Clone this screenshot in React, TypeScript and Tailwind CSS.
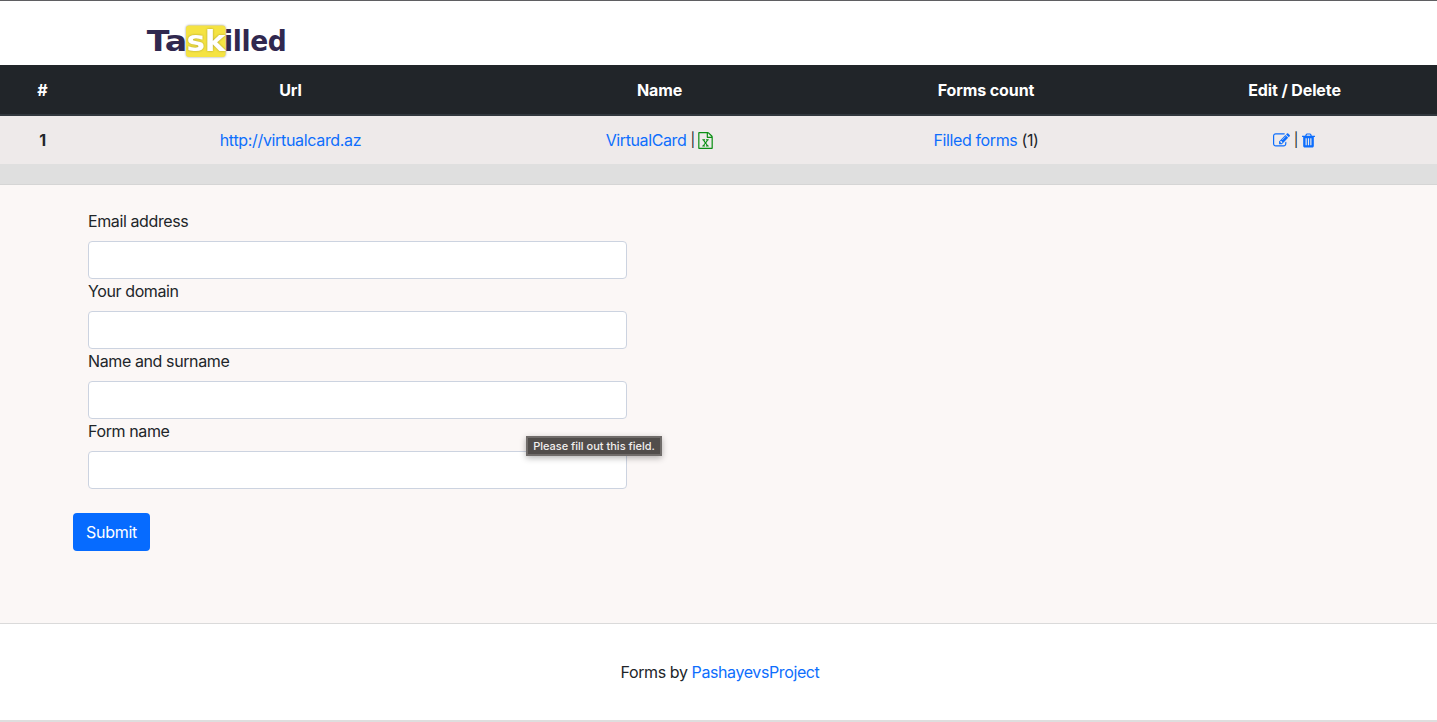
import React from "react";

const ICONS = {
  edit: "M888 1184l116-116-152-152-116 116v56h96v96h56zm440-720q-16-16-33 1l-350 350q-17 17-1 33t33-1l350-350q17-17 1-33zm80 594v190q0 119-84.5 203.5t-203.5 84.5h-832q-119 0-203.5-84.5t-84.5-203.5v-832q0-119 84.5-203.5t203.5-84.5h832q63 0 117 25 15 7 18 23 3 17-9 29l-49 49q-14 14-32 8-23-6-45-6h-832q-66 0-113 47t-47 113v832q0 66 47 113t113 47h832q66 0 113-47t47-113v-126q0-13 9-22l64-64q15-15 35-7t20 29zm-96-738l288 288-672 672h-288v-288zm444 132l-92 92-288-288 92-92q28-28 68-28t68 28l152 152q28 28 28 68t-28 68z",
  trash: "M704 1376v-704q0-14-9-23t-23-9h-64q-14 0-23 9t-9 23v704q0 14 9 23t23 9h64q14 0 23-9t9-23zm256 0v-704q0-14-9-23t-23-9h-64q-14 0-23 9t-9 23v704q0 14 9 23t23 9h64q14 0 23-9t9-23zm256 0v-704q0-14-9-23t-23-9h-64q-14 0-23 9t-9 23v704q0 14 9 23t23 9h64q14 0 23-9t9-23zm-544-992h448l-48-117q-7-9-17-11h-317q-10 2-17 11zm928 32v64q0 14-9 23t-23 9h-96v948q0 83-47 143.5t-113 60.5h-832q-66 0-113-58.5t-47-141.5v-952h-96q-14 0-23-9t-9-23v-64q0-14 9-23t23-9h309l70-167q15-37 54-63t79-26h320q40 0 79 26t54 63l70 167h309q14 0 23 9t9 23z",
  excel: "M1596 380q28 28 48 76t20 88v1152q0 40-28 68t-68 28h-1344q-40 0-68-28t-28-68v-1600q0-40 28-68t68-28h896q40 0 88 20t76 48zm-444-244v376h376q-10-29-22-41l-313-313q-12-12-41-22zm384 1528v-1024h-416q-40 0-68-28t-28-68v-416h-768v1536h1280zm-979-234v106h281v-106h-75l103-161q5-7 10-16.5t7.5-13.5 3.5-4h2q1 4 5 10 2 4 4.5 7.5t6 8 6.5 8.5l107 161h-76v106h291v-106h-68l-192-273 195-282h67v-107h-279v107h74l-103 159q-4 7-10 16.5t-9 13.5l-2 3h-2q-1-4-5-10-6-11-17-23l-106-159h76v-107h-290v107h68l189 272-194 283h-68z",
};

function Icon({ name, viewBox, className }: { name: keyof typeof ICONS; viewBox: string; className: string }) {
  return (
    <svg viewBox={viewBox} className={className} fill="currentColor" aria-hidden="true">
      <path d={ICONS[name]} />
    </svg>
  );
}

function Logo() {
  return (
    <svg width="150" height="38" viewBox="0 0 150 38" className="ml-[144px] block" aria-label="Taskilled">
      <g fontFamily="'DejaVu Sans', sans-serif" fontSize="29" fontWeight="700" fill="#30284f">
        <text x="2.8" y="29" textLength="40" lengthAdjust="spacingAndGlyphs">Ta</text>
        <rect x="42" y="3.5" width="39.5" height="31.5" rx="3" fill="#f5e342" className="drop-shadow-[0_0_1px_rgba(0,0,0,0.4)]" />
        <text x="42.5" y="29" textLength="38.5" lengthAdjust="spacingAndGlyphs" fill="#fff" className="drop-shadow-[0_0_1px_rgba(0,0,0,0.3)]">sk</text>
        <text x="80" y="29" textLength="62.5" lengthAdjust="spacingAndGlyphs">illed</text>
      </g>
    </svg>
  );
}

const COLUMNS = ["#", "Url", "Name", "Forms count", "Edit / Delete"];
const GRID = "grid grid-cols-[85px_411px_327px_326px_288px] text-center";

function Divider() {
  return <span className="mx-1 w-[5px] text-center text-[14px] tracking-normal">|</span>;
}

function Field({ label, id }: { label: string; id: string }) {
  return (
    <div className="flex flex-col">
      <label htmlFor={id} className="mb-2 h-6 self-start leading-6">{label}</label>
      <input id={id} required className="h-[38px] w-[539px] rounded border border-[#ccd3e0] bg-white px-3 outline-none" />
    </div>
  );
}

export default function App() {
  return (
    <div className="flex h-[722px] w-[1437px] flex-col overflow-hidden border-t border-[#5f5f62] bg-white font-['Inter',sans-serif] text-[16px] leading-6 tracking-[-0.39px] text-[#212529]">
      <header className="h-16 shrink-0 pt-[21px]">
        <Logo />
      </header>

      <section className="shrink-0">
        <div className={`${GRID} h-[51px] border-b-2 border-[#32383e] bg-[#212529] pt-[13px] font-bold tracking-[-0.1px] text-white`}>
          {COLUMNS.map((column) => <div key={column} className="last:pl-[3px]">{column}</div>)}
        </div>
        <div className={`${GRID} h-12 bg-[#eeeaea] pt-3`}>
          <div className="font-bold">1</div>
          <div className="tracking-[-0.33px]"><a className="text-[#0d6efd]">http://virtualcard.az</a></div>
          <div className="flex justify-center">
            <a className="text-[#0d6efd]">VirtualCard</a>
            <span className="flex">
              <Divider />
              <Icon name="excel" viewBox="128 0 1536 1792" className="-ml-px mt-1 h-[17px] w-[15px] text-[#0b8f14]" />
            </span>
          </div>
          <div><a className="text-[#0d6efd]">Filled forms</a> (1)</div>
          <div className="flex justify-center pl-px">
            <Icon name="edit" viewBox="0 0 1792 1792" className="mt-1 h-[17px] w-[17px] text-[#0d6efd]" />
            <Divider />
            <Icon name="trash" viewBox="192 0 1408 1792" className="-ml-px mt-1 h-[17px] w-[13px] text-[#0d6efd]" />
          </div>
        </div>
      </section>

      <div className="h-[21px] shrink-0 border-b border-[#d5d5d5] bg-[#dfdfdf]" />

      <main className="h-[439px] shrink-0 border-b border-[#dadada] bg-[#fbf7f6] pt-6">
        <form className="relative flex w-[700px] flex-col items-start pl-[88px]">
          <Field id="email" label="Email address" />
          <Field id="domain" label="Your domain" />
          <Field id="person" label="Name and surname" />
          <Field id="form" label="Form name" />
          <div role="tooltip" className="absolute top-[227px] left-[526px] flex h-5 w-[136px] items-center justify-center border-2 border-[#706c6a] bg-[#514d4b] text-[11px] leading-none font-medium tracking-[0px] whitespace-nowrap text-[#f1efee] shadow-[0_2px_6px_rgba(0,0,0,0.3)]">
            Please fill out this field.
          </div>
          <button type="button" className="mt-6 -ml-[15px] h-[38px] w-[77px] rounded bg-[#066bff] tracking-[-0.24px] text-white">Submit</button>
        </form>
      </main>

      <footer className="flex h-[96px] shrink-0 items-center justify-center gap-1 border-b border-white pl-[3px]">
        <span>Forms by</span>
        <a className="text-[#0d6efd]">PashayevsProject</a>
      </footer>
      <div className="h-[2px] shrink-0 bg-[#dedede]" />
    </div>
  );
}
